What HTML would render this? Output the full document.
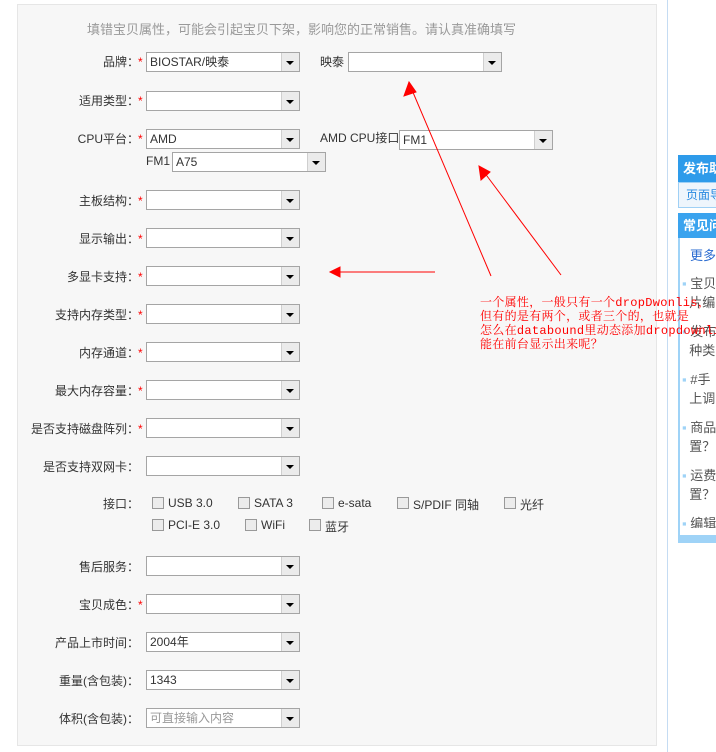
<!DOCTYPE html>
<html><head><meta charset="utf-8"><style>
*{margin:0;padding:0;box-sizing:border-box}
body{width:716px;height:752px;background:#fff;position:relative;overflow:hidden;font-family:"Liberation Sans","Noto Sans CJK SC",sans-serif;font-size:12px;color:#333}
#panel{position:absolute;left:17px;top:4px;width:640px;height:742px;background:#f7f7f7;border:1px solid #e6e6e6}
.a{position:absolute;white-space:nowrap}
.lab{position:absolute;right:577px;text-align:right;white-space:nowrap;line-height:20px}
.st{position:absolute;left:138px;color:#f00;line-height:20px;font-size:12px}
.sel{position:absolute;width:154px;height:20px;background:#fff;border:1px solid #a5a5a5;line-height:18px;padding-left:3px;color:#333}
.sel:after{content:"";position:absolute;right:0;top:0;width:17px;height:18px;background:#ebebeb;border-left:1px solid #cfcfcf}
.sel:before{content:"";position:absolute;right:5px;top:8px;border-left:4px solid transparent;border-right:4px solid transparent;border-top:4px solid #000;z-index:2}
.cb{position:absolute;width:12px;height:12px;border:1px solid #999;background:#ececec}
.rt{position:absolute;color:#f00;font-family:"Liberation Mono","Noto Serif CJK SC",monospace;font-size:12px;line-height:14px;white-space:nowrap;letter-spacing:0.3px}
.bl{color:#9fd3f7}
</style></head><body>
<div id="panel"></div>
<div class="a" style="left:87px;top:19px;color:#999;font-size:13px">填错宝贝属性，可能会引起宝贝下架，影响您的正常销售。请认真准确填写</div>

<div class="lab" style="top:52px">品牌：</div><div class="st" style="top:52px">*</div><div class="sel" style="left:146px;top:52px">BIOSTAR/映泰</div>
<div class="a" style="left:320px;top:52px;line-height:20px">映泰</div><div class="sel" style="left:348px;top:52px"></div>

<div class="lab" style="top:91px">适用类型：</div><div class="st" style="top:91px">*</div><div class="sel" style="left:146px;top:91px"></div>

<div class="lab" style="top:129px">CPU平台：</div><div class="st" style="top:129px">*</div><div class="sel" style="left:146px;top:129px">AMD</div>
<div class="a" style="left:320px;top:128px;line-height:20px">AMD CPU接口</div><div class="sel" style="left:399px;top:130px">FM1</div>
<div class="a" style="left:146px;top:151px;line-height:20px">FM1</div><div class="sel" style="left:172px;top:152px">A75</div>

<div class="lab" style="top:191px">主板结构：</div><div class="st" style="top:191px">*</div><div class="sel" style="left:146px;top:190px"></div>
<div class="lab" style="top:229px">显示输出：</div><div class="st" style="top:229px">*</div><div class="sel" style="left:146px;top:228px"></div>
<div class="lab" style="top:267px">多显卡支持：</div><div class="st" style="top:267px">*</div><div class="sel" style="left:146px;top:266px"></div>
<div class="lab" style="top:305px">支持内存类型：</div><div class="st" style="top:305px">*</div><div class="sel" style="left:146px;top:304px"></div>
<div class="lab" style="top:343px">内存通道：</div><div class="st" style="top:343px">*</div><div class="sel" style="left:146px;top:342px"></div>
<div class="lab" style="top:381px">最大内存容量：</div><div class="st" style="top:381px">*</div><div class="sel" style="left:146px;top:380px"></div>
<div class="lab" style="top:419px">是否支持磁盘阵列：</div><div class="st" style="top:419px">*</div><div class="sel" style="left:146px;top:418px"></div>
<div class="lab" style="top:457px">是否支持双网卡：</div><div class="sel" style="left:146px;top:456px"></div>

<div class="lab" style="top:494px">接口：</div>
<div class="cb" style="left:152px;top:497px"></div><div class="a" style="left:168px;top:496px">USB 3.0</div>
<div class="cb" style="left:238px;top:497px"></div><div class="a" style="left:254px;top:496px">SATA 3</div>
<div class="cb" style="left:322px;top:497px"></div><div class="a" style="left:338px;top:496px">e-sata</div>
<div class="cb" style="left:397px;top:497px"></div><div class="a" style="left:413px;top:496px">S/PDIF 同轴</div>
<div class="cb" style="left:504px;top:497px"></div><div class="a" style="left:520px;top:496px">光纤</div>
<div class="cb" style="left:152px;top:519px"></div><div class="a" style="left:168px;top:518px">PCI-E 3.0</div>
<div class="cb" style="left:245px;top:519px"></div><div class="a" style="left:261px;top:518px">WiFi</div>
<div class="cb" style="left:309px;top:519px"></div><div class="a" style="left:325px;top:518px">蓝牙</div>

<div class="lab" style="top:557px">售后服务：</div><div class="sel" style="left:146px;top:556px"></div>
<div class="lab" style="top:595px">宝贝成色：</div><div class="st" style="top:595px">*</div><div class="sel" style="left:146px;top:594px"></div>
<div class="lab" style="top:633px">产品上市时间：</div><div class="sel" style="left:146px;top:632px">2004年</div>
<div class="lab" style="top:671px">重量(含包装)：</div><div class="sel" style="left:146px;top:670px">1343</div>
<div class="lab" style="top:709px">体积(含包装)：</div><div class="sel" style="left:146px;top:708px;color:#999">可直接输入内容</div>

<!-- right side -->
<div class="a" style="left:667px;top:0;width:1px;height:752px;background:#c5dcf3"></div>
<div class="a" style="left:678px;top:155px;width:40px;height:27px;background:#2e9bea;color:#fff;font-weight:bold;font-size:13px;line-height:27px;padding-left:5px">发布助手</div>
<div class="a" style="left:678px;top:182px;width:40px;height:26px;background:#eef5fc;border:1px solid #9fd0f5;color:#2a8ae0;line-height:24px;padding-left:7px">页面导航</div>
<div class="a" style="left:678px;top:213px;width:40px;height:330px;border-left:2px solid #9fd3f7;border-bottom:8px solid #9fd3f7"></div>
<div class="a" style="left:678px;top:213px;width:40px;height:25px;background:#3aa3ee;color:#fff;font-weight:bold;font-size:13px;line-height:25px;padding-left:5px">常见问题</div>
<div class="a" style="left:690px;top:245px;color:#2a6bd0;font-size:13px">更多</div>
<div class="a" style="left:682px;top:274px;color:#555;font-size:13px;line-height:19px"><span class="bl">▪</span> 宝贝<br>&nbsp;&nbsp;片编</div>
<div class="a" style="left:682px;top:322px;color:#555;font-size:13px;line-height:19px"><span class="bl">▪</span> 发布<br>&nbsp;&nbsp;种类</div>
<div class="a" style="left:682px;top:370px;color:#555;font-size:13px;line-height:19px"><span class="bl">▪</span> #手<br>&nbsp;&nbsp;上调</div>
<div class="a" style="left:682px;top:418px;color:#555;font-size:13px;line-height:19px"><span class="bl">▪</span> 商品<br>&nbsp;&nbsp;置？</div>
<div class="a" style="left:682px;top:466px;color:#555;font-size:13px;line-height:19px"><span class="bl">▪</span> 运费<br>&nbsp;&nbsp;置？</div>
<div class="a" style="left:682px;top:514px;color:#555;font-size:13px;line-height:19px;height:14px;overflow:hidden"><span class="bl">▪</span> 编辑</div>

<svg class="a" style="left:0;top:0" width="716" height="752">
<g stroke="#f00" stroke-width="1" fill="#f00">
<line x1="491" y1="276" x2="412" y2="90"/><polygon points="409,82 404,96 416,92"/>
<line x1="561" y1="275" x2="484" y2="172"/><polygon points="479,166 481,180 490,172"/>
<line x1="435" y1="272" x2="336" y2="272"/><polygon points="330,272 340,267 340,277"/>
</g></svg>
<div class="rt" style="left:480px;top:296px">一个属性，一般只有一个dropDwonlis，<br>但有的是有两个，或者三个的，也就是<br>怎么在databound里动态添加dropdownlist<br>能在前台显示出来呢？</div>
</body></html>
